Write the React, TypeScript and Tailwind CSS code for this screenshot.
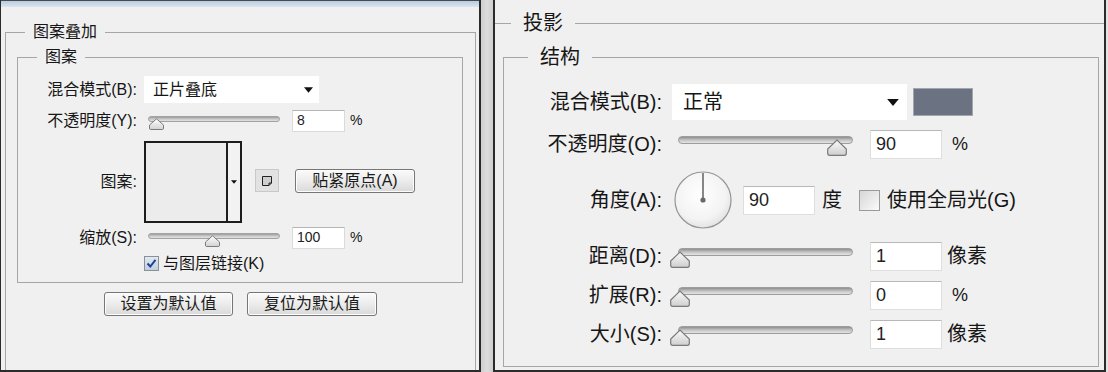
import React from "react";

const Arrow = ({ w, h }: { w: number; h: number }) => (
  <svg width={w} height={h} viewBox="0 0 10 6">
    <path d="M0 0 H10 L5 6 Z" fill="#111" />
  </svg>
);

const SmallThumb = () => (
  <svg width="15" height="12" viewBox="0 0 15 12">
    <defs>
      <linearGradient id="st" x1="0" y1="0" x2="0" y2="1">
        <stop offset="0" stopColor="#ffffff" />
        <stop offset="1" stopColor="#d2d2d2" />
      </linearGradient>
    </defs>
    <path d="M1.5 11.5 Q0.5 11.5 0.5 10 V7 L7.5 0.8 L14.5 7 V10 Q14.5 11.5 13.5 11.5 Z" fill="url(#st)" stroke="#7c7c7c" />
  </svg>
);

const BigThumb = () => (
  <svg width="20" height="17" viewBox="0 0 20 17">
    <defs>
      <linearGradient id="bt" x1="0" y1="0" x2="0" y2="1">
        <stop offset="0" stopColor="#fbfbfb" />
        <stop offset="1" stopColor="#cfcfcf" />
      </linearGradient>
    </defs>
    <path d="M2.5 16.3 Q0.7 16.3 0.7 14.3 V10 L10 1 L19.3 10 V14.3 Q19.3 16.3 17.5 16.3 Z" fill="url(#bt)" stroke="#7a7a7a" strokeWidth="1.2" />
  </svg>
);

// left dialog slider; pos is the thumb offset in px
const SmallSlider = ({ pos }: { pos: number }) => (
  <div className="relative w-[141px] h-[22px] shrink-0">
    <div className="absolute left-[4px] top-[6px] w-[132px] h-[6px] rounded-full border border-[#a2a2a2] bg-linear-to-b from-[#9c9c9c] via-[#c9c9c9] to-[#e2e2e2]" />
    <div className="absolute top-[8px] flex" style={{ left: pos }}>
      <SmallThumb />
    </div>
  </div>
);

const BigSlider = ({ pos }: { pos: number }) => (
  <div className="relative w-[190px] h-[34px] shrink-0">
    <div className="absolute left-[6px] top-[9px] w-[175px] h-[8px] rounded-full border border-[#9d9d9d] bg-linear-to-b from-[#8f8f8f] via-[#c4c4c4] to-[#e4e4e4]" />
    <div className="absolute top-[12px] flex" style={{ left: pos }}>
      <BigThumb />
    </div>
  </div>
);

const SmallInput = ({ value }: { value: string }) => (
  <div className="ml-[7px] w-[53px] h-[22px] bg-white border border-[#dadada] border-t-[#b5b5b5] flex items-center pl-[4px] text-[14px] text-[#222]">
    {value}
  </div>
);

const BigInput = ({ value, className }: { value: string; className: string }) => (
  <div className={`${className} w-[72px] h-[29px] bg-white border border-[#dedede] border-t-[#b8b8b8] flex items-center pl-[5px] text-[18px] text-[#222]`}>
    {value}
  </div>
);

const WinButton = ({ label, w }: { label: string; w: string }) => (
  <div className={`${w} h-[24px] rounded-[3px] border border-[#767676] bg-linear-to-b from-[#fafafa] via-[#ececec] to-[#d9d9d9] flex items-center justify-center text-[16px] leading-none text-[#1a1a1a] shadow-[inset_0_0_0_1px_#fdfdfd]`}>
    {label}
  </div>
);

const LeftLabel = ({ text }: { text: string }) => (
  <div className="w-[119px] shrink-0 text-right text-[16px] leading-[22px] whitespace-nowrap">{text}</div>
);

const RightLabel = ({ text }: { text: string }) => (
  <div className="w-[158px] shrink-0 text-right text-[20px] leading-[28px] whitespace-nowrap">{text}</div>
);

const PatternOverlay = () => (
  <div className="w-[481px] h-[372px] shrink-0 flex flex-col bg-[#f0f0f0] border-l border-r-2 border-b-2 border-[#2b2b2b] overflow-hidden">
    <div className="h-[7px] shrink-0 border-t border-[#4a4a4a] bg-linear-to-b from-[#b7cbe0] to-[#dae5f0]" />
    <fieldset className="ml-[4px] mr-[3px] mt-[14px] h-[420px] shrink-0 border border-[#a6a6a6]">
      <legend className="ml-[19px] px-[8px] text-[16px] leading-[22px]">图案叠加</legend>
      <fieldset className="ml-[11px] mr-[12px] mt-[3px] border border-[#a6a6a6] pb-[10px]">
        <legend className="ml-[19px] px-[8px] text-[16px] leading-[22px]">图案</legend>

        <div className="mt-[8px] h-[27px] flex items-center">
          <LeftLabel text="混合模式(B):" />
          <div className="ml-[7px] w-[175px] h-[27px] bg-white flex items-center justify-between pl-[9px] pr-[6px]">
            <span className="text-[16px]">正片叠底</span>
            <Arrow w={9} h={6} />
          </div>
        </div>

        <div className="mt-[4px] h-[27px] flex items-center">
          <LeftLabel text="不透明度(Y):" />
          <div className="ml-[7px] flex items-center">
            <SmallSlider pos={5} />
            <SmallInput value="8" />
            <span className="ml-[5px] text-[14px]">%</span>
          </div>
        </div>

        <div className="mt-[7px] h-[82px] flex items-center">
          <LeftLabel text="图案:" />
          <div className="ml-[7px] w-[98px] h-[82px] border-2 border-[#1d1d1d] flex">
            <div className="w-[80px] h-full bg-[#ececec]" />
            <div className="flex-1 border-l-2 border-[#1d1d1d] flex items-center justify-center bg-[#f2f2f2]">
              <Arrow w={6} h={4} />
            </div>
          </div>
          <div className="ml-[13px] w-[24px] h-[23px] mb-[3px] border border-[#c9c9c9] bg-[#e2e2e2] flex items-center justify-center">
            <svg width="12" height="12" viewBox="0 0 12 12">
              <path d="M1.5 1.5 H10.5 V8 L8 10.5 H1.5 Z" fill="#cfcfcf" stroke="#222" />
              <path d="M10.5 8 H8 V10.5" fill="none" stroke="#222" />
            </svg>
          </div>
          <div className="ml-[16px] mb-[3px]">
            <WinButton label="贴紧原点(A)" w="w-[120px]" />
          </div>
        </div>

        <div className="mt-[3px] h-[23px] flex items-center">
          <LeftLabel text="缩放(S):" />
          <div className="ml-[7px] flex items-center">
            <SmallSlider pos={61} />
            <SmallInput value="100" />
            <span className="ml-[5px] text-[14px]">%</span>
          </div>
        </div>

        <div className="mt-[6px] h-[17px] flex items-center">
          <div className="w-[126px] shrink-0" />
          <div className="w-[15px] h-[15px] border border-[#8e8f8f] bg-linear-to-b from-[#dfe9f5] to-[#bfd0e6] flex items-center justify-center">
            <svg width="11" height="11" viewBox="0 0 11 11">
              <path d="M1.5 5.5 L4.3 8.5 L9.5 1.8" fill="none" stroke="#27408c" strokeWidth="2" />
            </svg>
          </div>
          <span className="ml-[4px] text-[16px] leading-[22px]">与图层链接(K)</span>
        </div>
      </fieldset>

      <div className="mt-[9px] flex justify-center gap-[14px]">
        <WinButton label="设置为默认值" w="w-[129px]" />
        <WinButton label="复位为默认值" w="w-[130px]" />
      </div>
    </fieldset>
  </div>
);

const Dial = () => (
  <svg width="58" height="58" viewBox="0 0 58 58" className="ml-[2px] shrink-0">
    <defs>
      <radialGradient id="dg" cx="0.45" cy="0.4" r="0.65">
        <stop offset="0" stopColor="#ffffff" />
        <stop offset="0.7" stopColor="#f3f3f3" />
        <stop offset="1" stopColor="#dedede" />
      </radialGradient>
    </defs>
    <circle cx="29" cy="29" r="28" fill="url(#dg)" stroke="#959595" strokeWidth="1.2" />
    <line x1="29" y1="29" x2="29" y2="2" stroke="#6a6a6a" strokeWidth="1.6" />
    <circle cx="29" cy="29" r="2.6" fill="#6a6a6a" />
  </svg>
);

const SliderRow = ({ label, pos, value, unit, mt }: { label: string; pos: number; value: string; unit: string; mt: string }) => (
  <div className={`${mt} h-[34px] flex items-center`}>
    <RightLabel text={label} />
    <div className="ml-[10px] flex items-center">
      <BigSlider pos={pos} />
      <BigInput value={value} className="ml-[8px]" />
      <span className={unit === "%" ? "ml-[10px] text-[18px]" : "ml-[5px] text-[20px]"}>{unit}</span>
    </div>
  </div>
);

const DropShadow = () => (
  <div className="w-[613px] h-[372px] shrink-0 bg-[#f0f0f0] border-l-2 border-r-2 border-b-2 border-[#2b2b2b] overflow-hidden">
    <fieldset className="mt-[9px] border-0 border-t border-[#a6a6a6]">
      <legend className="ml-[16px] px-[12px] text-[20px] leading-[28px]">投影</legend>
      <fieldset className="ml-[8px] mr-[5px] mt-[6px] border border-[#a6a6a6] pb-[15px]">
        <legend className="ml-[24px] px-[12px] text-[20px] leading-[28px]">结构</legend>

        <div className="mt-[13px] h-[36px] flex items-center">
          <RightLabel text="混合模式(B):" />
          <div className="ml-[10px] w-[235px] h-[36px] bg-white flex items-center justify-between pl-[11px] pr-[8px]">
            <span className="text-[20px]">正常</span>
            <Arrow w={12} h={7} />
          </div>
          <div className="ml-[6px] w-[60px] h-[28px] bg-[#6b7282] border border-[#a3a6ad]" />
        </div>

        <SliderRow label="不透明度(O):" pos={155} value="90" unit="%" mt="mt-[7px]" />

        <div className="mt-[10px] h-[58px] flex items-center">
          <RightLabel text="角度(A):" />
          <div className="ml-[10px] flex items-center">
            <Dial />
            <BigInput value="90" className="ml-[11px]" />
            <span className="ml-[7px] text-[20px]">度</span>
            <div className="ml-[17px] w-[21px] h-[21px] border border-[#9a9a9a] bg-linear-to-br from-[#d6d6d6] to-[#fbfbfb]" />
            <span className="ml-[7px] text-[20px]">使用全局光(G)</span>
          </div>
        </div>

        <SliderRow label="距离(D):" pos={-2} value="1" unit="像素" mt="mt-[10px]" />
        <SliderRow label="扩展(R):" pos={-2} value="0" unit="%" mt="mt-[5px]" />
        <SliderRow label="大小(S):" pos={-2} value="1" unit="像素" mt="mt-[5px]" />
      </fieldset>
    </fieldset>
  </div>
);

const App = () => {
  return (
    <div className="w-[1108px] h-[372px] flex bg-[#d3d3d3] overflow-hidden text-[#161616] font-['Liberation_Sans','Noto_Sans_CJK_SC',sans-serif]">
      <PatternOverlay />
      <div className="w-[12px] shrink-0 bg-linear-to-r from-[#cfcfcf] via-[#dcdcdc] to-[#cfcfcf]" />
      <DropShadow />
      <div className="w-[2px] shrink-0 bg-[#e4e4e4]" />
    </div>
  );
};

export default App;
